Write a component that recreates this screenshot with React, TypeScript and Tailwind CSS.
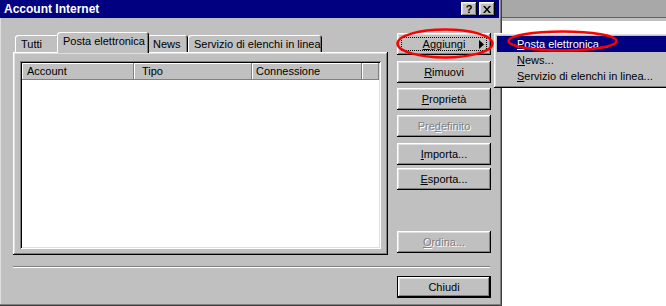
import React from "react";

const raised =
  "shadow-[inset_-1px_-1px_#000,inset_1px_1px_#fff,inset_-2px_-2px_#808080,inset_2px_2px_#dfdfdf]";
const disabledText = "text-[#808080] [text-shadow:1px_1px_0_#fff]";

function Btn({
  children,
  className = "",
  disabled = false,
}: {
  children: React.ReactNode;
  className?: string;
  disabled?: boolean;
}) {
  return (
    <div
      className={`relative h-[22px] w-[94px] flex items-center justify-center bg-[#c0c0c0] ${raised} text-[11px] leading-none ${
        disabled ? disabledText : "text-black"
      } ${className}`}
    >
      {children}
    </div>
  );
}

function Tab({
  label,
  selected = false,
  w,
}: {
  label: string;
  selected?: boolean;
  w: string;
}) {
  return (
    <div
      className={`${w} ${
        selected
          ? "h-[21px] mb-[-1px] mx-[-2px] z-10 pt-[3px] pl-[6px]"
          : "h-[17px] pt-[3px] pl-[6px]"
      } relative bg-[#c0c0c0] rounded-t-[3px] shadow-[inset_1px_1px_#fff,inset_-1px_0_#000,inset_-2px_0_#808080] text-[11px] leading-[13px] text-black whitespace-nowrap`}
    >
      {label}
    </div>
  );
}

function HeaderCell({ label, w, pl }: { label: string; w: string; pl: string }) {
  return (
    <div
      className={`${w} ${pl} h-[17px] flex items-center bg-[#c0c0c0] shadow-[inset_-1px_-1px_#808080,inset_1px_1px_#fff] text-[11px] text-black`}
    >
      {label}
    </div>
  );
}

export default function App() {
  return (
    <div
      className="relative w-[666px] h-[306px] overflow-hidden flex bg-white"
      style={{ fontFamily: '"Liberation Sans", Arial, sans-serif' }}
    >
      {/* Dialog */}
      <div className="w-[502px] h-[306px] flex flex-col bg-[#c0c0c0] shadow-[inset_-1px_-1px_#404040,inset_-2px_-2px_#808080,inset_1px_0_#dfdfdf]">
        {/* Title bar */}
        <div className="h-[18px] w-[499px] bg-[#000080] flex items-center pl-[4px] pr-[4px]">
          <span className="text-white font-bold text-[12px] leading-none">
            Account Internet
          </span>
          <div className="ml-auto flex gap-[2px]">
            <div className={`w-[16px] h-[14px] bg-[#c0c0c0] ${raised} flex items-center justify-center text-[11px] font-bold leading-none text-black`}>
              ?
            </div>
            <div className={`w-[16px] h-[14px] bg-[#c0c0c0] ${raised} flex items-center justify-center`}>
              <svg width="8" height="7" viewBox="0 0 8 7">
                <path d="M0 0h2l2 2.5L6 0h2L5 3.5 8 7H6L4 4.5 2 7H0l3-3.5z" fill="#000" />
              </svg>
            </div>
          </div>
        </div>

        {/* Body */}
        <div className="flex flex-col pl-[13px] pt-[14px]">
          <div className="flex gap-[9px]">
            {/* Left column */}
            <div className="flex flex-col w-[375px]">
              <div className="h-[20px] flex items-end pl-[2px]">
                <Tab label="Tutti" w="w-[44px]" />
                <Tab label="Posta elettronica" w="w-[92px]" selected />
                <Tab label="News" w="w-[41px]" />
                <Tab label="Servizio di elenchi in linea" w="w-[134px]" />
              </div>
              <div className={`h-[203px] bg-[#c0c0c0] ${raised} pt-[9px] px-[7px] pb-[6px]`}>
                <div className="h-full bg-white p-[2px] shadow-[inset_1px_1px_#808080,inset_-1px_-1px_#fff,inset_2px_2px_#000,inset_-2px_-2px_#dfdfdf]">
                  <div className="flex">
                    <HeaderCell label="Account" w="w-[112px]" pl="pl-[5px]" />
                    <HeaderCell label="Tipo" w="w-[118px]" pl="pl-[8px]" />
                    <HeaderCell label="Connessione" w="w-[110px]" pl="pl-[4px]" />
                    <HeaderCell label="" w="flex-1" pl="pl-0" />
                  </div>
                </div>
              </div>
            </div>

            {/* Buttons column */}
            <div className="flex flex-col pt-[1px]">
              <Btn>
                <div className="absolute inset-[4px] border border-dotted border-black" />
                <span>
                  <u>A</u>ggiungi
                </span>
                <svg className="absolute right-[7px] top-[7px]" width="5" height="9" viewBox="0 0 5 9">
                  <path d="M0 0L5 4.5L0 9z" fill="#000" />
                </svg>
              </Btn>
              <Btn className="mt-[6px]">
                <span>
                  <u>R</u>imuovi
                </span>
              </Btn>
              <Btn className="mt-[5px]">
                <span>
                  <u>P</u>roprietà
                </span>
              </Btn>
              <Btn className="mt-[5px]" disabled>
                <span>
                  Pre<u>d</u>efinito
                </span>
              </Btn>
              <Btn className="mt-[6px]">
                <span>
                  <u>I</u>mporta...
                </span>
              </Btn>
              <Btn className="mt-[3px]">
                <span>
                  <u>E</u>sporta...
                </span>
              </Btn>
              <Btn className="mt-[41px]" disabled>
                <span>
                  <u>O</u>rdina...
                </span>
              </Btn>
            </div>
          </div>

          {/* Separator */}
          <div className="mt-[11px] w-[477px] h-[2px] border-t border-t-[#808080] border-b border-b-white" />

          {/* Chiudi */}
          <div className="mt-[8px] ml-[384px] h-[22px] w-[94px] flex items-center justify-center bg-[#c0c0c0] shadow-[inset_0_0_0_1px_#000,inset_-2px_-2px_#000,inset_2px_2px_#fff,inset_-3px_-3px_#808080,inset_3px_3px_#dfdfdf] text-[11px] text-black leading-none">
            Chiudi
          </div>
        </div>
      </div>

      {/* Background window on the right */}
      <div className="flex-1 flex flex-col">
        <div className="h-[17px] bg-[#a8a8a8]" />
        <div className="h-[1px] bg-[#606060]" />
        <div className="h-[3px] bg-[#c0c0c0]" />
        <div className="flex-1 bg-white" />
      </div>

      {/* Popup menu */}
      <div className={`absolute left-[494px] top-[33px] w-[180px] h-[55px] bg-[#c0c0c0] ${raised} p-[3px] flex flex-col text-[11px] leading-none`}>
        <div className="h-[16px] bg-[#000080] text-white flex items-center pl-[20px]">
          <span>
            <u>P</u>osta elettronica...
          </span>
        </div>
        <div className="h-[16px] text-black flex items-center pl-[20px]">
          <span>
            <u>N</u>ews...
          </span>
        </div>
        <div className="h-[17px] text-black flex items-center pl-[20px]">
          <span>
            <u>S</u>ervizio di elenchi in linea...
          </span>
        </div>
      </div>

      {/* Red annotations */}
      <svg className="absolute left-0 top-0 pointer-events-none" width="666" height="306">
        <ellipse cx="445" cy="43.5" rx="47.5" ry="14" fill="none" stroke="#ff0000" strokeWidth="2.5" />
        <ellipse cx="562.5" cy="41" rx="54" ry="9.5" fill="none" stroke="#ff0000" strokeWidth="2.5" />
      </svg>
    </div>
  );
}
